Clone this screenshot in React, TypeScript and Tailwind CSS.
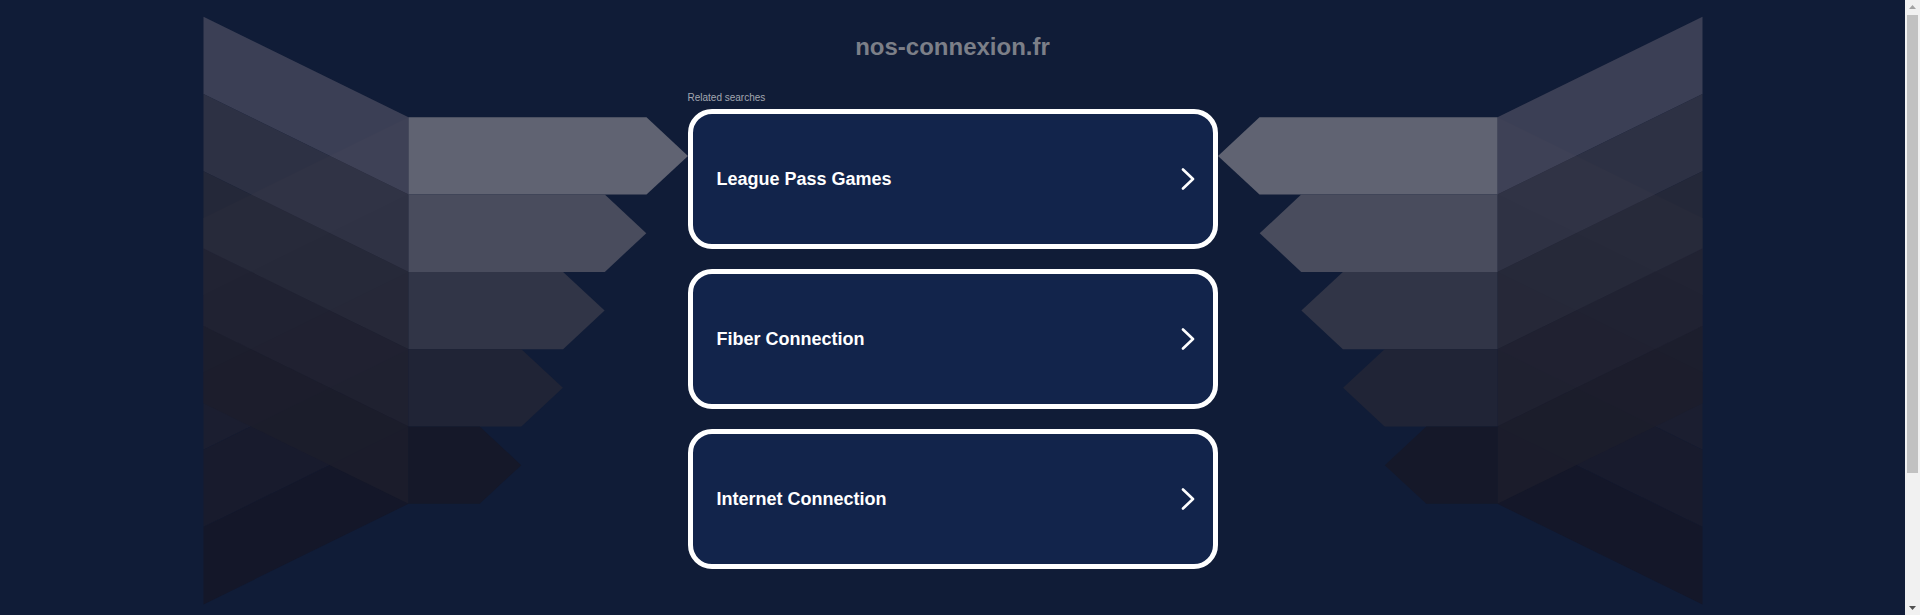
import React from 'react';

const STEP = 77.3;
const L = 203;
const R = 408;
const TOP_L = 16.7;
const TOP_R = 117.3;

// lower fan (rising bands), drawn first, solid
const riseFills = ['#24283c', '#1f2336', '#1b1e30', '#181b2d', '#141729'];
// upper fan (falling bands), drawn on top, slightly see-through
const fallFills = ['#43455a', '#323546', '#282a3a', '#212231', '#1c1d2c'];
const arrowFills = ['#606372', '#494c5d', '#313547', '#202436', '#151829'];

const searches = ['League Pass Games', 'Fiber Connection', 'Internet Connection'];

function pts(list: number[][]) {
	return list.map((p) => p.join(',')).join(' ');
}

function Wing({ flip }: { flip?: boolean }) {
	const bands = [0, 1, 2, 3, 4];
	const shapes = (
		<>
			{bands.map((k) => (
				<polygon
					key={'u' + k}
					fill={riseFills[k]}
					points={pts([
						[R, TOP_R + STEP * k],
						[L, TOP_R + 100.6 + STEP * k],
						[L, TOP_R + 100.6 + STEP * (k + 1)],
						[R, TOP_R + STEP * (k + 1)],
					])}
				/>
			))}
			{bands.map((k) => (
				<polygon
					key={'d' + k}
					fill={fallFills[k]}
					fillOpacity={0.85}
					points={pts([
						[L, TOP_L + STEP * k],
						[R, TOP_R + STEP * k],
						[R, TOP_R + STEP * (k + 1)],
						[L, TOP_L + STEP * (k + 1)],
					])}
				/>
			))}
			{bands.map((k) => {
				const top = TOP_R + STEP * k;
				const bottom = top + STEP;
				const end = 646 - 41.7 * k;
				return (
					<polygon
						key={'a' + k}
						fill={arrowFills[k]}
						points={pts([
							[R, top],
							[end, top],
							[end + 41.5, (top + bottom) / 2],
							[end, bottom],
							[R, bottom],
						])}
					/>
				);
			})}
		</>
	);

	return (
		<svg
			width="485"
			height="615"
			viewBox={flip ? '1217.5 0 485 615' : '202.5 0 485 615'}
			className="shrink-0"
		>
			{flip ? <g transform="matrix(-1 0 0 1 1905 0)">{shapes}</g> : shapes}
		</svg>
	);
}

function SearchCard({ label }: { label: string }) {
	return (
		<a
			href="#"
			className="flex h-[140px] items-center justify-between rounded-[24px] border-[5px] border-white bg-[#12244b] pl-6 pr-[18px]"
		>
			<span className="text-[18px] font-bold leading-[22px] text-white">
				{label}
			</span>
			<svg width="14" height="22" viewBox="0 0 14 22" fill="none">
				<polyline
					points="2,1.5 12,11 2,20.5"
					stroke="white"
					strokeWidth="2.6"
					strokeLinecap="round"
					strokeLinejoin="round"
				/>
			</svg>
		</a>
	);
}

function Scrollbar() {
	return (
		<div className="flex h-[615px] w-[15px] shrink-0 flex-col items-center bg-[#f1f1f1]">
			<svg width="15" height="15" viewBox="0 0 15 15" className="shrink-0">
				<polygon points="4,9 11,9 7.5,5" fill="#a3a3a3" />
			</svg>
			<div className="h-[458px] w-[11px] shrink-0 bg-[#c1c1c1]" />
			<div className="flex-1" />
			<svg width="15" height="15" viewBox="0 0 15 15" className="shrink-0">
				<polygon points="4,6 11,6 7.5,10" fill="#505050" />
			</svg>
		</div>
	);
}

export default function App() {
	return (
		<div className="flex h-[615px] overflow-hidden bg-[#101c37] font-['Liberation_Sans',Arial,sans-serif]">
			<div className="flex-1">
				<div className="mx-auto flex w-[1500px] items-start">
					<Wing />
					<main className="flex w-[530px] shrink-0 flex-col pt-[33px]">
						<h1 className="text-center text-[24px] font-bold leading-[28px] text-[#7c7f88]">
							nos-connexion.fr
						</h1>
						<p className="mt-[31px] text-[10px] leading-[12px] text-[#a3a7b1]">
							Related searches
						</p>
						<div className="mt-[5px] flex flex-col gap-5">
							{searches.map((s) => (
								<SearchCard key={s} label={s} />
							))}
						</div>
					</main>
					<Wing flip />
				</div>
			</div>
			<Scrollbar />
		</div>
	);
}
